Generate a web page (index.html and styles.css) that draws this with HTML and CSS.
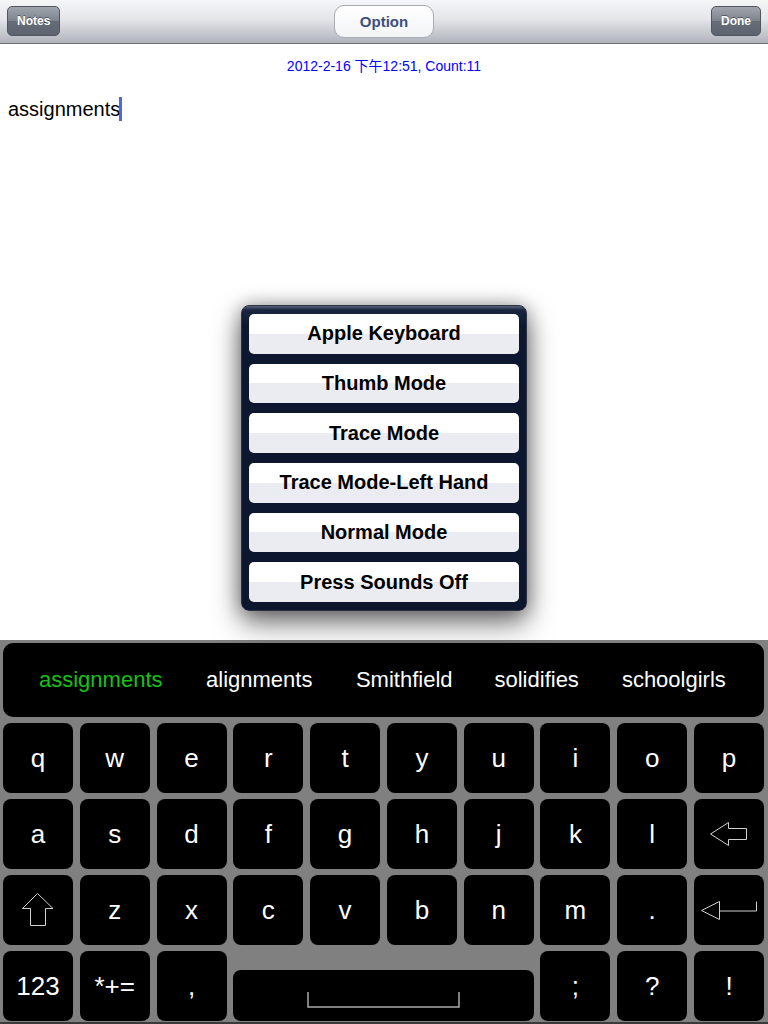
FILE: index.html
```html
<!DOCTYPE html>
<html>
<head>
<meta charset="utf-8">
<link rel="stylesheet" href="styles.css">
</head>
<body>
<div class="screen">
  <header class="navbar">
    <button class="nav-btn left">Notes</button>
    <button class="seg-btn">Option</button>
    <button class="nav-btn right">Done</button>
  </header>
  <main class="content">
    <div class="date">2012-2-16 下午12:51, Count:11</div>
    <div class="editor">assignments<span class="caret"></span></div>
  </main>
  <div class="popup">
    <button class="menu-btn">Apple Keyboard</button>
    <button class="menu-btn">Thumb Mode</button>
    <button class="menu-btn">Trace Mode</button>
    <button class="menu-btn">Trace Mode-Left Hand</button>
    <button class="menu-btn">Normal Mode</button>
    <button class="menu-btn">Press Sounds Off</button>
  </div>
  <section class="keyboard">
    <div class="suggestions">
      <span class="sug active">assignments</span>
      <span class="sug">alignments</span>
      <span class="sug">Smithfield</span>
      <span class="sug">solidifies</span>
      <span class="sug">schoolgirls</span>
    </div>
    <div class="keys">
      <div class="key">q</div><div class="key">w</div><div class="key">e</div><div class="key">r</div><div class="key">t</div><div class="key">y</div><div class="key">u</div><div class="key">i</div><div class="key">o</div><div class="key">p</div>
      <div class="key">a</div><div class="key">s</div><div class="key">d</div><div class="key">f</div><div class="key">g</div><div class="key">h</div><div class="key">j</div><div class="key">k</div><div class="key">l</div>
      <div class="key"><svg width="38" height="25" viewBox="0 0 38 25"><path d="M0.5 12 L18.5 0.5 L18.5 6.5 L36.5 6.5 L36.5 17.5 L18.5 17.5 L18.5 23.5 Z" fill="none" stroke="#d0d0d0" stroke-width="1"/></svg></div>
      <div class="key"><svg width="32" height="34" viewBox="0 0 32 34"><path d="M15.5 0.5 L31 15.5 L23.5 15.5 L23.5 32.5 L8.5 32.5 L8.5 15.5 L0.5 15.5 Z" fill="none" stroke="#d0d0d0" stroke-width="1"/></svg></div>
      <div class="key">z</div><div class="key">x</div><div class="key">c</div><div class="key">v</div><div class="key">b</div><div class="key">n</div><div class="key">m</div><div class="key">.</div>
      <div class="key"><svg width="57" height="19" viewBox="0 0 57 19"><path d="M18.5 0.5 L0.5 9.5 L18.5 18.5 Z M18.5 10 L55.5 10 L55.5 0.5" fill="none" stroke="#d0d0d0" stroke-width="1"/></svg></div>
      <div class="key small">123</div><div class="key">*+=</div><div class="key">,</div>
      <div class="key space"><svg width="153" height="16" viewBox="0 0 153 16"><path d="M1 0 L1 15 L152 15 L152 0" fill="none" stroke="#aaaaaa" stroke-width="1.5"/></svg></div>
      <div class="key">;</div><div class="key">?</div><div class="key">!</div>
    </div>
  </section>
</div>
</body>
</html>
```

FILE: styles.css
```css
* { box-sizing: border-box; }
html, body { margin: 0; padding: 0; }
body {
  width: 768px;
  height: 1024px;
  overflow: hidden;
  font-family: "Liberation Sans", Arial, "Noto Sans CJK SC", sans-serif;
  background: #fff;
}
.screen {
  position: relative;
  width: 768px;
  height: 1024px;
  display: flex;
  flex-direction: column;
}
.navbar {
  height: 44px;
  flex: none;
  display: grid;
  grid-template-columns: 1fr auto 1fr;
  align-items: center;
  padding: 0 7px;
  background: linear-gradient(#f5f6f8 0%, #e3e5e9 45%, #b0b3bc 100%);
  border-bottom: 1px solid #6e717a;
}
.nav-btn {
  height: 30px;
  padding: 0 9px;
  border-radius: 5px;
  border: 1px solid #4f545d;
  background: linear-gradient(#a0a5ad 0%, #7d838d 50%, #666c77 51%, #5d6470 100%);
  color: #fff;
  font-family: "Liberation Sans", Arial, sans-serif;
  font-weight: bold;
  font-size: 12px;
  text-shadow: 0 -1px 0 rgba(0,0,0,0.4);
  margin-top: -1px;
}
.nav-btn.left { justify-self: start; }
.nav-btn.right { justify-self: end; }
.seg-btn {
  width: 100px;
  height: 33px;
  border-radius: 10px;
  border: 1px solid #a9acb3;
  background: linear-gradient(#ffffff, #f3f4f6);
  color: #3b5080;
  font-family: "Liberation Sans", Arial, sans-serif;
  font-weight: bold;
  font-size: 15px;
  margin-top: -1px;
}
.content {
  flex: 1;
  background: #fff;
}
.date {
  text-align: center;
  color: #0000ff;
  font-size: 14px;
  line-height: 16px;
  margin-top: 14px;
}
.editor {
  margin-top: 22px;
  padding-top: 1px;
  padding-left: 8px;
  font-size: 20px;
  line-height: 24px;
  color: #000;
  display: flex;
  align-items: center;
}
.caret {
  display: inline-block;
  width: 3px;
  height: 24px;
  background: #4f66dc;
  margin-left: -1px;
}
.popup {
  position: absolute;
  left: 241px;
  top: 305px;
  width: 286px;
  height: 306px;
  padding: 8px 7px;
  border-radius: 8px;
  background: linear-gradient(#5a6478 0px, #1a2640 4px, #0d1830 20px, #0c162d 100%);
  border: 1px solid #2a3346;
  box-shadow: 0 12px 28px rgba(0,0,0,0.55), 0 0 18px rgba(0,0,0,0.3);
  display: flex;
  flex-direction: column;
  gap: 10px;
}
.menu-btn {
  height: 40px;
  border-radius: 5px;
  border: none;
  background: linear-gradient(#ffffff 0%, #ffffff 50%, #ebecf1 50%, #ebecf1 100%);
  color: #000;
  font-family: "Liberation Sans", Arial, sans-serif;
  font-weight: bold;
  font-size: 20px;
  padding: 0;
}
.keyboard {
  height: 384px;
  flex: none;
  background: #808080;
  padding: 3px 4px 0 3px;
  border-bottom: 2px solid #3a3a3a;
}
.suggestions {
  height: 74px;
  background: #000;
  border-radius: 10px;
  display: flex;
  align-items: center;
  font-size: 22px;
  color: #fff;
  padding-left: 36px;
  margin-bottom: 6px;
}
.sug { margin-right: 43.5px; }
.sug:nth-child(3) { margin-right: 42px; }
.sug:nth-child(4) { margin-right: 43px; }
.sug.active { color: #17c017; }
.keys {
  display: grid;
  grid-template-columns: repeat(10, 1fr);
  grid-auto-rows: 70px;
  column-gap: 6.8px;
  row-gap: 6px;
}
.key {
  background: #000;
  border-radius: 8px;
  color: #fff;
  font-size: 26px;
  display: flex;
  align-items: center;
  justify-content: center;
}
.key.space {
  grid-column: span 4;
  align-self: end;
  height: 51px;
  align-items: flex-end;
  padding-bottom: 13px;
}
```
